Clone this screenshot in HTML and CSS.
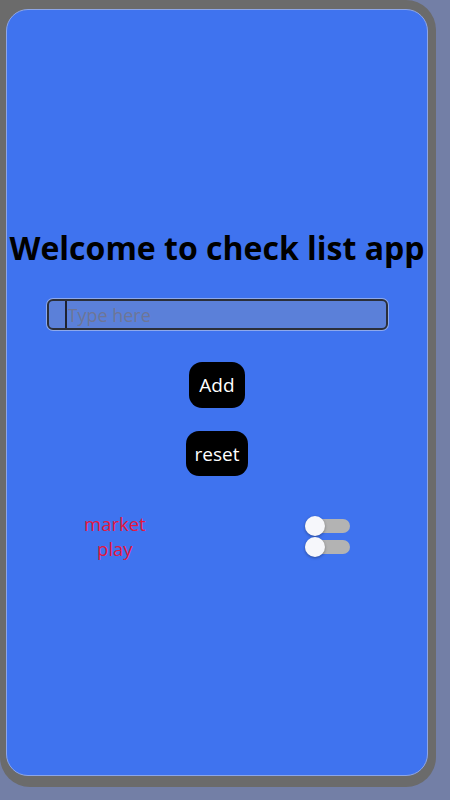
FILE: index.html
```html
<!DOCTYPE html>
<html lang="en">
<head>
    <meta charset="UTF-8">
    <meta name="viewport" content="width=device-width, initial-scale=1.0">
    <title>Check list</title>
    <link rel="stylesheet" href="styles.css">
</head>
<body>
    <div class="phone">
        <div class="screen">
            <h1 class="title">Welcome to check list app</h1>

            <input type="text" class="item-input" placeholder="Type here" autocomplete="off" />

            <button class="btn">Add</button>
            <button class="btn">reset</button>

            <!-- List items -->
            <div class="list-row">
                <div class="item-text">market<br>play</div>
                <div class="toggles">
                    <span class="toggle"><span class="knob"></span></span>
                    <span class="toggle"><span class="knob"></span></span>
                </div>
            </div>
        </div>
    </div>
</body>
</html>
```

FILE: styles.css
```css
body {
    margin: 0;
    padding: 0;
    background-color: #737fa6;
    font-family: "Open Sans", "Noto Sans", sans-serif;
    height: 800px;
    overflow: hidden;
}

.phone {
    width: 436px;
    height: 787px;
    box-sizing: border-box;
    padding: 9px 8px 11px 6px;
    background-color: #6b6b6b;
    border-radius: 0 30px 30px 30px;
}

.screen {
    height: 100%;
    box-sizing: border-box;
    background-color: #3f73ef;
    border: 1px solid #8da6e8;
    border-radius: 22px;
    display: flex;
    flex-direction: column;
    align-items: center;
    justify-content: center;
    padding-top: 2px;
}

.title {
    margin: 0;
    font-size: 32px;
    font-weight: 700;
    color: #000;
    white-space: nowrap;
}

.item-input {
    margin-top: 30px;
    width: 341px;
    height: 31px;
    box-sizing: border-box;
    padding: 0 0 0 19px;
    border: 2px solid #2b2f3a;
    border-radius: 6px;
    box-shadow: 0 0 0 1px #8ea9ec;
    background: linear-gradient(to right, transparent 16px, #1e2230 16px, #1e2230 18px, transparent 18px), #5b80d9;
    font-family: inherit;
    font-size: 18px;
    color: #222;
    outline: none;
}

.item-input::placeholder {
    color: #6e7696;
}

.btn {
    margin-top: 32px;
    padding: 0 10px;
    height: 46px;
    border: none;
    border-radius: 13px;
    background-color: #000;
    color: #fff;
    font-family: inherit;
    font-size: 19px;
    cursor: pointer;
}

.btn + .btn {
    margin-top: 23px;
    height: 45px;
    padding: 0 9px;
}

.list-row {
    margin-top: 35px;
    width: 266px;
    display: flex;
    justify-content: space-between;
    align-items: flex-start;
}

.item-text {
    color: #e4173f;
    font-size: 18.5px;
    line-height: 25px;
    text-align: center;
}

.toggles {
    display: flex;
    flex-direction: column;
    gap: 7px;
    padding-top: 8px;
}

.toggle {
    position: relative;
    display: block;
    width: 45px;
    height: 14px;
    border-radius: 7px;
    background-color: #b3b3b3;
}

.knob {
    position: absolute;
    left: 0;
    top: -3px;
    width: 20px;
    height: 20px;
    border-radius: 50%;
    background-color: #f6f7fb;
    box-shadow: 0 1px 3px rgba(0, 0, 0, 0.35);
}
```
